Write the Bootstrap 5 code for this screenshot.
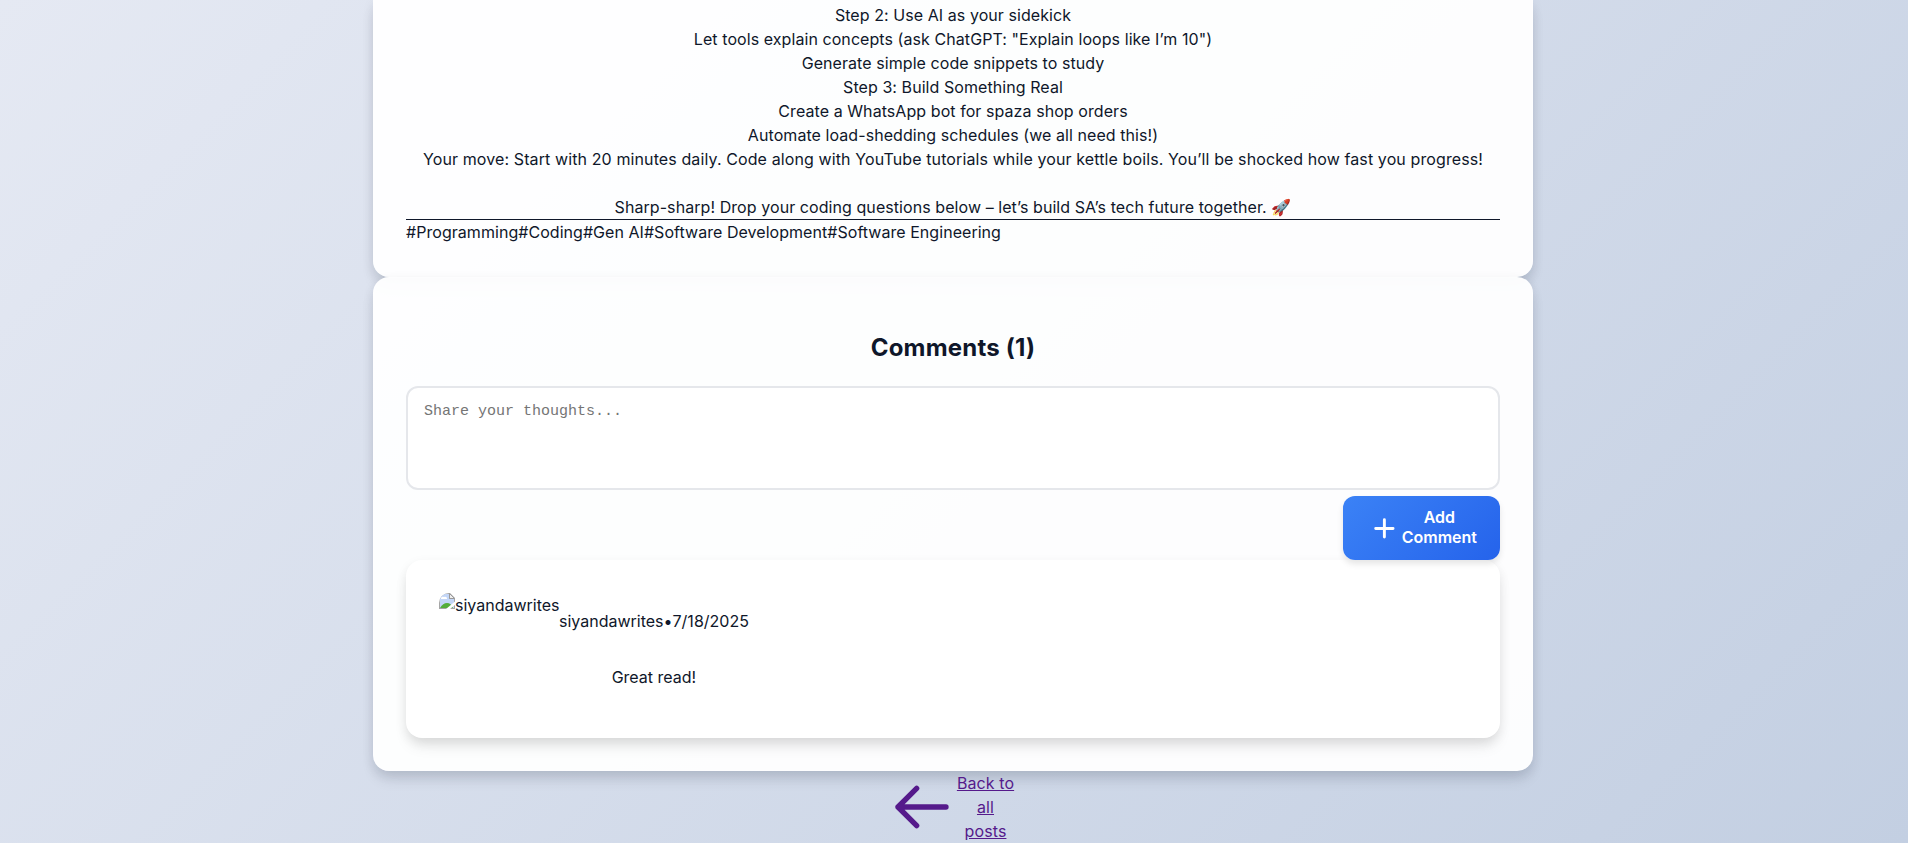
<!DOCTYPE html>
<html lang="en">
<head>
<meta charset="utf-8">
<meta name="viewport" content="width=device-width, initial-scale=1">
<title>Blog post</title>
<link href="https://cdn.jsdelivr.net/npm/bootstrap@5.3.0/dist/css/bootstrap.min.css" rel="stylesheet">
<style>
  html, body { height: 843px; overflow: hidden; }
  body {
    font-family: Inter, sans-serif; font-size: 16px; line-height: 24px; color: #0f172a;
    background: linear-gradient(135deg, #e5e9f3 0%, #c3cfe2 100%);
  }
  .page { width: 1160px; margin-left: 373px; }
  .panel {
    background: rgba(255,255,255,.95); border: 1px solid rgba(255,255,255,.3); border-radius: 16px;
    padding: 32px; box-shadow: 0 10px 15px -3px rgba(15,23,42,.12), 0 4px 12px rgba(15,23,42,.09);
  }
  .post { border-top: 0; border-radius: 0 0 16px 16px; padding-top: 3px; }
  .post-text { letter-spacing: .07px; }
  .long-line { letter-spacing: .11px; }
  .tags { border-top: 1px solid #0f172a; letter-spacing: .045px; }
  .heading { font-size: 24px; line-height: 36px; font-weight: 700; padding-top: 20px; margin-bottom: 20px; letter-spacing: .2px; }
  .thoughts {
    display: block; width: 100%; height: 104px; resize: none; border: 2px solid #e5e7eb; border-radius: 12px;
    padding: 14px 16px; font: 15px/20px "Liberation Mono", monospace; background: #fff; margin-bottom: 6px;
  }
  .thoughts::placeholder { color: #757575; }
  .add {
    width: 157px; height: 64px; border: 0; border-radius: 12px; color: #fff; font-weight: 600; line-height: 20px;
    background: linear-gradient(135deg, #3b82f6, #2563eb); box-shadow: 0 4px 6px rgba(0,0,0,.1); padding: 0 23px 0 24px;
  }
  .add span { margin-bottom: 2px; }
  .comment { height: 178px; border-radius: 16px; background: #fff; padding: 33px; box-shadow: 0 10px 15px -3px rgba(0,0,0,.1), 0 4px 12px rgba(0,0,0,.07); }
  .avatar { height: 24px; width: 120px; }
  .back { color: #551a8b; padding-left: 1px; }
  .back span { width: 64px; text-decoration: underline; letter-spacing: .1px; }
</style>
</head>
<body>
<main class="page">
  <article class="panel post">
    <div class="post-text text-center">
      Step 2: Use AI as your sidekick<br>
      Let tools explain concepts (ask ChatGPT: "Explain loops like I’m 10")<br>
      Generate simple code snippets to study<br>
      Step 3: Build Something Real<br>
      Create a WhatsApp bot for spaza shop orders<br>
      Automate load-shedding schedules (we all need this!)<br>
      <span class="long-line">Your move: Start with 20 minutes daily. Code along with YouTube tutorials while your kettle boils. You’ll be shocked how fast you progress!</span><br>
      <br>
      Sharp-sharp! Drop your coding questions below – let’s build SA’s tech future together. 🚀
    </div>
    <div class="tags d-flex"><span>#Programming</span><span>#Coding</span><span>#Gen AI</span><span>#Software Development</span><span>#Software Engineering</span></div>
  </article>
  <section class="panel">
    <h2 class="heading text-center">Comments (1)</h2>
    <textarea class="thoughts" placeholder="Share your thoughts..."></textarea>
    <div class="d-flex justify-content-end">
      <button class="add d-flex align-items-center justify-content-between" type="button">
        <svg width="36" height="36" viewBox="0 0 24 24" fill="none" stroke="currentColor" stroke-width="2" stroke-linecap="round"><path d="M12 6.3v12m6-6H6"/></svg>
        <span>Add<br>Comment</span>
      </button>
    </div>
    <div class="comment d-flex">
      <div class="avatar d-flex flex-shrink-0">
        <svg class="flex-shrink-0" width="16" height="16" viewBox="0 0 16 16">
          <defs><clipPath id="round"><path d="M0 16V10A10 10 0 0 1 10 0H16V16Z"/></clipPath></defs>
          <g clip-path="url(#round)">
            <path d="M0 0H11L16 5V16H0Z" fill="#a5a5a5"/><path d="M1 1H10V6H15V15H1Z" fill="#c3d6f7"/>
            <path d="M2 6a2 2 0 0 1 3-2a2 2 0 0 1 3 2Z" fill="#fff"/><path d="M1 15Q4 10 8 10T14 15Z" fill="#55ad3b"/>
            <path d="M10.5.5V5.5H15.5Z" fill="#eee" stroke="#999"/><path d="M7 16L16 8.5V12L11 16Z" fill="#fff"/>
          </g>
        </svg>
        <span>siyandawrites</span>
      </div>
      <div>
        <p class="my-3">siyandawrites•7/18/2025</p>
        <p class="my-3 pt-3 text-center">Great read!</p>
      </div>
    </div>
  </section>
  <a href="#" class="back d-flex justify-content-center align-items-center text-center text-decoration-none">
    <svg width="64" height="64" viewBox="0 0 24 24" fill="none" stroke="currentColor" stroke-width="2" stroke-linecap="round" stroke-linejoin="round"><path d="M10 19l-7-7m0 0l7-7m-7 7h18"/></svg>
    <span>Back to<br>all<br>posts</span>
  </a>
</main>
<script src="https://cdn.jsdelivr.net/npm/bootstrap@5.3.0/dist/js/bootstrap.bundle.min.js"></script>
</body>
</html>
